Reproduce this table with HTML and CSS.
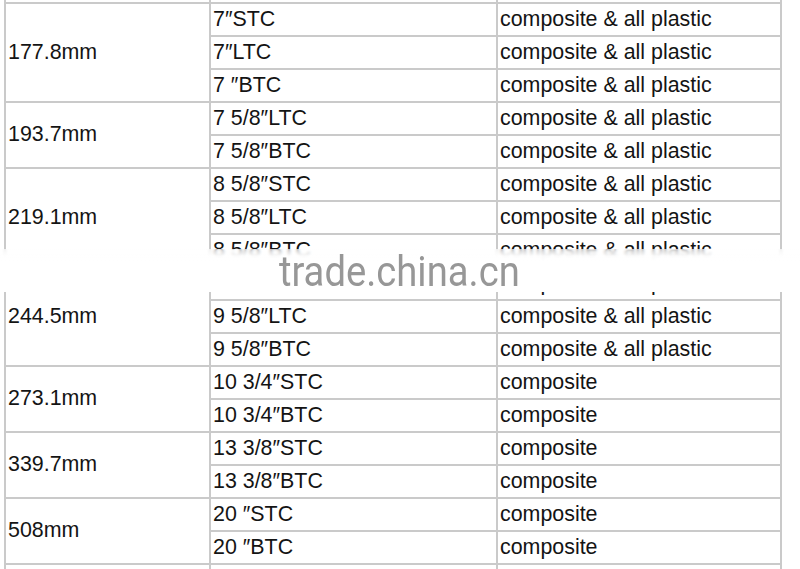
FILE: index.html
```html
<!DOCTYPE html>
<html>
<head>
<meta charset="utf-8">
<link rel="stylesheet" href="styles.css">
</head>
<body>
<div class="page">
<table class="spec">
<colgroup><col class="c1"><col class="c2"><col class="c3"></colgroup>
<tr><td></td><td></td><td></td></tr>
<tr><td rowspan="3">177.8mm</td><td>7″STC</td><td>composite &amp; all plastic</td></tr>
<tr><td>7″LTC</td><td>composite &amp; all plastic</td></tr>
<tr><td>7 ″BTC</td><td>composite &amp; all plastic</td></tr>
<tr><td rowspan="2">193.7mm</td><td>7 5/8″LTC</td><td>composite &amp; all plastic</td></tr>
<tr><td>7 5/8″BTC</td><td>composite &amp; all plastic</td></tr>
<tr><td rowspan="3">219.1mm</td><td>8 5/8″STC</td><td>composite &amp; all plastic</td></tr>
<tr><td>8 5/8″LTC</td><td>composite &amp; all plastic</td></tr>
<tr><td>8 5/8″BTC</td><td>composite &amp; all plastic</td></tr>
<tr><td rowspan="3">244.5mm</td><td>9 5/8″STC</td><td>composite &amp; all plastic</td></tr>
<tr><td>9 5/8″LTC</td><td>composite &amp; all plastic</td></tr>
<tr><td>9 5/8″BTC</td><td>composite &amp; all plastic</td></tr>
<tr><td rowspan="2">273.1mm</td><td>10 3/4″STC</td><td>composite</td></tr>
<tr><td>10 3/4″BTC</td><td>composite</td></tr>
<tr><td rowspan="2">339.7mm</td><td>13 3/8″STC</td><td>composite</td></tr>
<tr><td>13 3/8″BTC</td><td>composite</td></tr>
<tr><td rowspan="2">508mm</td><td>20 ″STC</td><td>composite</td></tr>
<tr><td>20 ″BTC</td><td>composite</td></tr>
<tr><td></td><td></td><td></td></tr>
</table>
<div class="watermark"><span class="wm-text">trade.china.cn</span></div>
</div>
</body>
</html>
```

FILE: styles.css
```css
html, body {
  margin: 0;
  padding: 0;
  background: #fff;
}
.page {
  position: relative;
  width: 800px;
  height: 569px;
  overflow: hidden;
}
.spec {
  border-collapse: collapse;
  table-layout: fixed;
  width: 778px;
  margin: -31px 0 0 4px;
  font-family: "Liberation Sans", Arial, sans-serif;
  font-size: 21.4px;
  color: #141414;
}
.c1 { width: 205px; }
.c2 { width: 287px; }
.c3 { width: 284px; }
.spec tr { height: 33px; }
.spec td {
  border: 2px solid #cacaca;
  padding: 0 0 2px 2px;
  vertical-align: middle;
  white-space: nowrap;
  line-height: 24px;
}
.watermark {
  position: absolute;
  left: 0;
  right: 0;
  top: 249px;
  height: 43px;
  background: linear-gradient(to bottom, rgba(255,255,255,0.6) 0%, rgba(255,255,255,0.96) 16%, #fff 30%, #fff 100%);
  backdrop-filter: blur(1.5px);
  display: flex;
  justify-content: center;
}
.wm-text {
  font-family: Roboto, "Liberation Sans", sans-serif;
  font-size: 42px;
  line-height: 42px;
  color: #979797;
  margin-top: 2px;
  margin-left: -2px;
  transform: scaleX(0.91);
  transform-origin: center top;
}
```
